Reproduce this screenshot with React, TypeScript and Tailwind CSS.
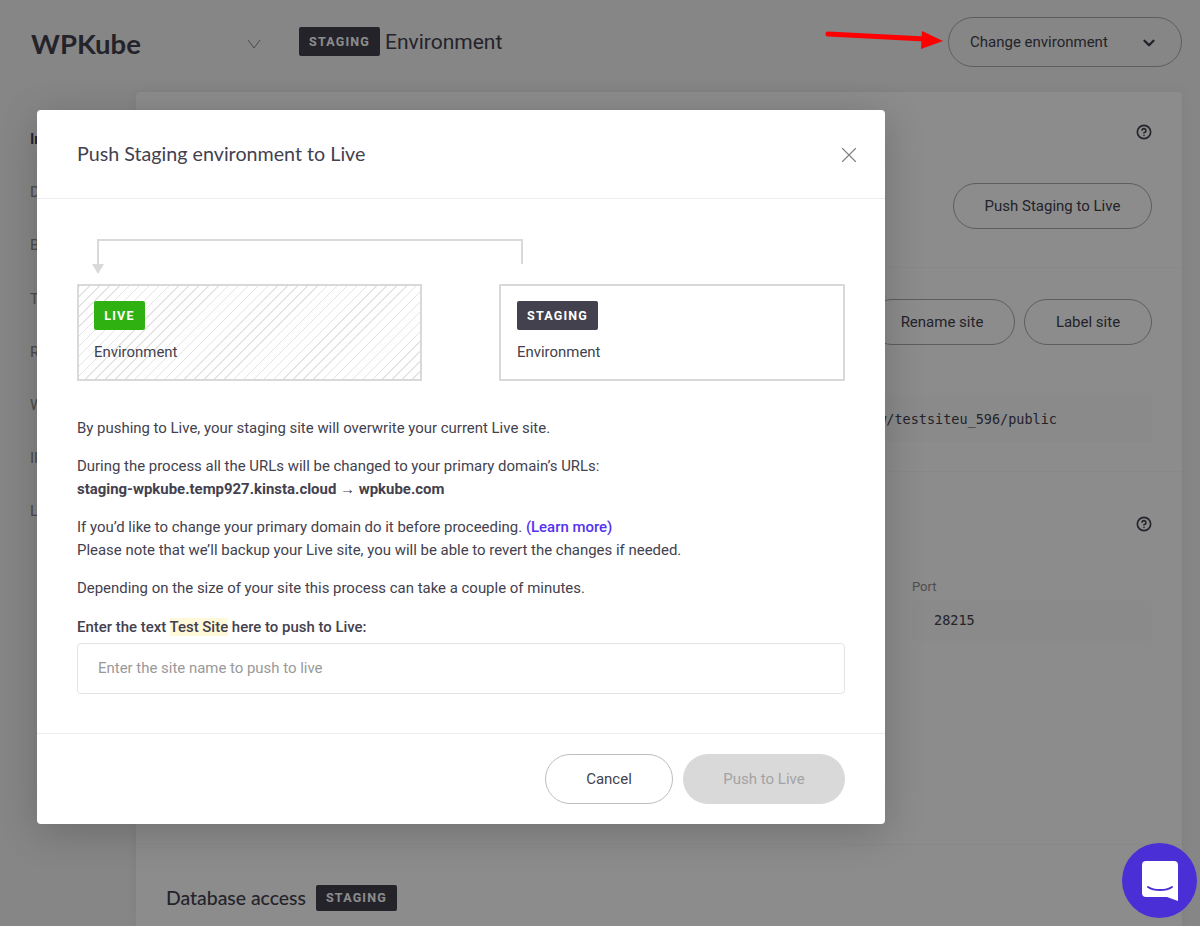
import { ChevronDown, CircleHelp, X } from "lucide-react";

const sideItems = ["Info", "Domains", "Backups", "Tools", "Redirects", "WP Plugins", "IP Deny", "Logs"];

function Tag({ children, className = "" }: { children: string; className?: string }) {
  return (
    <span
      className={`flex items-center justify-center rounded-[2px] pt-[1px] font-['Roboto'] font-bold tracking-[1.2px] text-white ${className}`}
    >
      {children}
    </span>
  );
}

function PillButton({ children, className = "" }: { children: string; className?: string }) {
  return (
    <button
      className={`h-[46px] rounded-full border border-[#aaaaaa] pt-[1px] font-['Roboto'] text-[15px] font-normal text-[#43414e] ${className}`}
    >
      {children}
    </button>
  );
}

function EnvBox({ hatched, children }: { hatched?: boolean; children: React.ReactNode }) {
  return (
    <div
      className={`h-[97px] border-2 border-[#d9d9d9] pt-[15px] ${
        hatched
          ? "w-[345px] bg-[repeating-linear-gradient(135deg,#e4e4e4_0px,#e4e4e4_1px,#ffffff_1px,#ffffff_7px)] pl-[15px]"
          : "w-[346px] bg-white pl-[16px]"
      }`}
    >
      {children}
      <p className="mt-[12px] text-[14.95px] leading-[20px] text-[#43414e]">Environment</p>
    </div>
  );
}

// Pagina de fondo, queda atenuada detras del modal.
function Page() {
  return (
    <div className="flex h-[926px] flex-col bg-[#f4f4f4] font-['Roboto'] text-[#43414e]">
      <header className="flex h-[92px] shrink-0 items-start pl-[31px] pr-[18px]">
        <span className="mt-[25px] w-[216px] font-['Lato'] text-[27.5px] font-bold leading-[38px]">WPKube</span>
        <svg width="14" height="10" viewBox="0 0 14 10" className="mt-[39px] text-[#888888]">
          <path d="M1 1l6 8 6-8" fill="none" stroke="currentColor" strokeWidth="1" />
        </svg>
        <Tag className="ml-[38px] mt-[27px] h-[29px] w-[81px] bg-[#43414e] text-[12.5px]">STAGING</Tag>
        <span className="ml-[5px] mt-[28px] text-[21px] leading-[28px]">Environment</span>
        <button className="ml-auto mt-[17px] flex h-[50px] w-[234px] items-center justify-between rounded-full border border-[#aaaaaa] pl-[21px] pr-[23px] pt-[1px] text-[15px] font-normal">
          Change environment
          <ChevronDown size={18} strokeWidth={3.2} />
        </button>
      </header>

      <div className="flex min-h-0 flex-1">
        <nav className="flex w-[136px] shrink-0 flex-col gap-[33.2px] pl-[30px] pt-[37px] text-[15px] leading-[20px]">
          {sideItems.map((item, i) => (
            <span key={item} className={i === 0 ? "font-semibold" : "text-[#8c8c8c]"}>
              {item}
            </span>
          ))}
        </nav>

        <main className="mr-[18px] flex-1 rounded-t bg-white shadow-[0_0_12px_rgba(0,0,0,0.06)]">
          <section className="h-[176px] border-b border-[#f7f7f7] px-[30px] pt-[32px]">
            <div className="flex justify-end">
              <CircleHelp size={16} strokeWidth={2.5} />
            </div>
            <div className="mt-[43px] flex justify-end">
              <PillButton className="w-[199px]">Push Staging to Live</PillButton>
            </div>
          </section>

          <section className="h-[204px] border-b border-[#f7f7f7] px-[30px] pt-[31px]">
            <div className="flex justify-end gap-[9px]">
              <PillButton className="w-[146px]">Rename site</PillButton>
              <PillButton className="w-[128px]">Label site</PillButton>
            </div>
            <div className="ml-[300px] mt-[50px] flex h-[47px] items-center justify-end rounded bg-[#fbfbfb] pr-[95px] pt-[1px] font-['DejaVu_Sans_Mono'] text-[13.5px]">
              /www/testsiteu_596/public
            </div>
          </section>

          <section className="h-[373px] border-b border-[#f7f7f7] px-[30px] pt-[44px]">
            <div className="flex justify-end">
              <CircleHelp size={16} strokeWidth={2.5} />
            </div>
            <div className="ml-auto mt-[47px] w-[240px]">
              <p className="text-[13px] leading-[16px] text-[#8f8f8f]">Port</p>
              <div className="mt-[5px] flex h-[41px] items-center rounded bg-[#fbfbfb] pl-[22px] font-['DejaVu_Sans_Mono'] text-[13.5px]">
                28215
              </div>
            </div>
          </section>

          <section className="flex items-center px-[30px] pt-[38px]">
            <h2 className="font-['Lato'] text-[19.4px] font-medium">Database access</h2>
            <Tag className="ml-[10px] h-[26px] w-[81px] bg-[#43414e] text-[12.5px]">STAGING</Tag>
          </section>
        </main>
      </div>
    </div>
  );
}

function PushModal() {
  return (
    <div className="absolute left-[37px] top-[110px] h-[714px] w-[848px] rounded bg-white font-['Roboto'] text-[#43414e] shadow-[0_8px_40px_rgba(0,0,0,0.2)]">
      <div className="flex h-[89px] items-center justify-between border-b border-[#ededed] pl-[40px] pr-[23px]">
        <h1 className="font-['Lato'] text-[19.7px] font-normal">Push Staging environment to Live</h1>
        <X size={26} strokeWidth={1} className="mt-[2px] text-[#7f7f7f]" />
      </div>

      <div className="h-[535px] border-b border-[#ededed] px-[40px] pt-[40px]">
        <svg width="768" height="45" viewBox="0 0 768 45" className="block">
          <path d="M445 25V1H21v26" fill="none" stroke="#d9d9d9" strokeWidth="2" />
          <path d="M15 25h12l-6 10z" fill="#d9d9d9" />
        </svg>
        <div className="flex justify-between">
          <EnvBox hatched>
            <Tag className="h-[29px] w-[51px] bg-[#2fb211] text-[12.5px]">LIVE</Tag>
          </EnvBox>
          <EnvBox>
            <Tag className="h-[29px] w-[81px] bg-[#43414e] text-[12.5px]">STAGING</Tag>
          </EnvBox>
        </div>

        <div className="mt-[36px] flex flex-col gap-[15px] text-[14.95px] leading-[23px]">
          <p>By pushing to Live, your staging site will overwrite your current Live site.</p>
          <p>
            During the process all the URLs will be changed to your primary domain’s URLs:
            <br />
            <b className="font-bold">staging-wpkube.temp927.kinsta.cloud → wpkube.com</b>
          </p>
          <p>
            If you’d like to change your primary domain do it before proceeding.{" "}
            <a className="font-medium text-[#5333ed]">(Learn more)</a>
            <br />
            Please note that we’ll backup your Live site, you will be able to revert the changes if needed.
          </p>
          <p>Depending on the size of your site this process can take a couple of minutes.</p>
          <p className="mt-[1px] font-medium">
            Enter the text <span className="bg-[#fff8d9]">Test Site</span> here to push to Live:
          </p>
        </div>

        <input
          placeholder="Enter the site name to push to live"
          className="mt-[4px] h-[51px] w-full rounded border border-[#e3e3e3] px-[20px] pb-[2px] text-[14.95px] outline-none placeholder:text-[#999999]"
        />
      </div>

      <div className="flex justify-end gap-[10px] px-[40px] pt-[20px]">
        <button className="h-[50px] w-[128px] rounded-full border border-[#bdbdbd] text-[15px] font-normal">
          Cancel
        </button>
        <button className="h-[50px] w-[162px] rounded-full bg-[#d9d9d9] text-[15px] font-normal text-[#a3a3a3]">
          Push to Live
        </button>
      </div>
    </div>
  );
}

export default function App() {
  return (
    <div className="relative h-[926px] overflow-hidden">
      <Page />
      <div className="absolute inset-0 bg-black/45" />
      <PushModal />

      {/* Flecha roja de la anotacion */}
      <svg width="130" height="30" viewBox="0 0 130 30" className="absolute left-[820px] top-[26px]">
        <path d="M8 8l97 5" stroke="#fe0000" strokeWidth="5" strokeLinecap="round" />
        <path d="M102 5l21 10-22 8z" fill="#fe0000" />
      </svg>

      {/* Burbuja de chat */}
      <button className="absolute left-[1122px] top-[843px] flex h-[75px] w-[75px] items-center justify-center rounded-full bg-[#4a2fd6]">
        <svg width="36" height="40" viewBox="0 0 36 40">
          <path
            d="M4 0h28a4 4 0 0 1 4 4v36l-11-4H4a4 4 0 0 1-4-4V4a4 4 0 0 1 4-4z"
            fill="#ffffff"
          />
          <path d="M6 26c6 4 18 4 24 0" fill="none" stroke="#4a2fd6" strokeWidth="2" strokeLinecap="round" />
        </svg>
      </button>
    </div>
  );
}
